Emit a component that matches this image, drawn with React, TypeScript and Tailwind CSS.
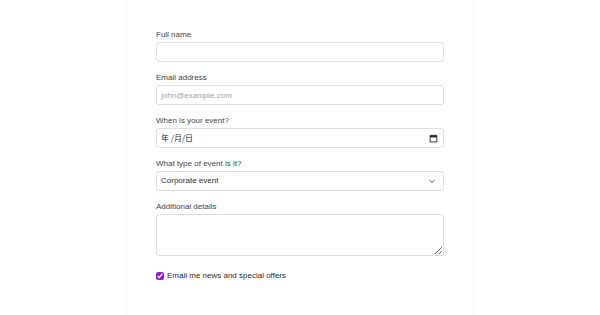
import { useState } from "react";

const labelCls = "block text-[8px] leading-[10px] text-[#45454d] mb-[2px]";
const boxCls =
  "block w-full h-[20px] rounded-[3px] border border-[#dedede] bg-white px-[4px] text-[8px] text-[#2a2a2e] outline-none";

const App = () => {
  const [news, setNews] = useState(true);

  return (
    <div className="bg-white min-h-[315px] font-['Liberation_Sans',Arial,sans-serif]">
      <div className="mx-auto w-[348px] min-h-[315px] border-x border-[#f8f8f8] px-[29px] pt-[30px]">
        <form className="flex flex-col gap-[11px]">
          {/* Full name */}
          <div>
            <label className={labelCls}>Full name</label>
            <input type="text" className={boxCls} />
          </div>

          {/* Email */}
          <div>
            <label className={labelCls}>Email address</label>
            <input
              type="email"
              placeholder="john@example.com"
              className={`${boxCls} placeholder:text-[#a1a1aa]`}
            />
          </div>

          {/* Date */}
          <div>
            <label className={labelCls}>When is your event?</label>
            <div className={`${boxCls} flex items-center justify-between`}>
              <span className="text-[8px] text-[#2a2a2e] font-['Noto_Sans_CJK_SC',sans-serif]">年 /月/日</span>
              <svg width="9" height="9" viewBox="0 0 16 16" className="mr-[1px]">
                <rect x="2" y="3" width="12" height="11" fill="none" stroke="#222" strokeWidth="1.6" />
                <rect x="2" y="3" width="12" height="3" fill="#222" />
                <rect x="4.5" y="1" width="1.6" height="3" fill="#222" />
                <rect x="9.9" y="1" width="1.6" height="3" fill="#222" />
              </svg>
            </div>
          </div>

          {/* Event type */}
          <div>
            <label className={labelCls}>What type of event is it?</label>
            <div className={`${boxCls} flex items-center justify-between`}>
              <span>Corporate event</span>
              <svg width="8" height="8" viewBox="0 0 16 16" className="mr-[3px]">
                <path d="M3 6l5 5 5-5" fill="none" stroke="#444" strokeWidth="1.8" />
              </svg>
            </div>
          </div>

          {/* Details */}
          <div>
            <label className={labelCls}>Additional details</label>
            <textarea className="block w-full h-[42px] rounded-[3px] border border-[#dedede] bg-white px-[4px] py-[3px] text-[8px] outline-none" />
          </div>

          {/* Newsletter */}
          <label className="mt-[3px] flex items-center gap-[3px] text-[8px] text-[#2a2a2e]">
            <input
              type="checkbox"
              checked={news}
              onChange={e => setNews(e.target.checked)}
              className="m-0 w-[8px] h-[8px] accent-[#8a1ee0]"
            />
            Email me news and special offers
          </label>
        </form>
      </div>
    </div>
  );
};

export default App;
